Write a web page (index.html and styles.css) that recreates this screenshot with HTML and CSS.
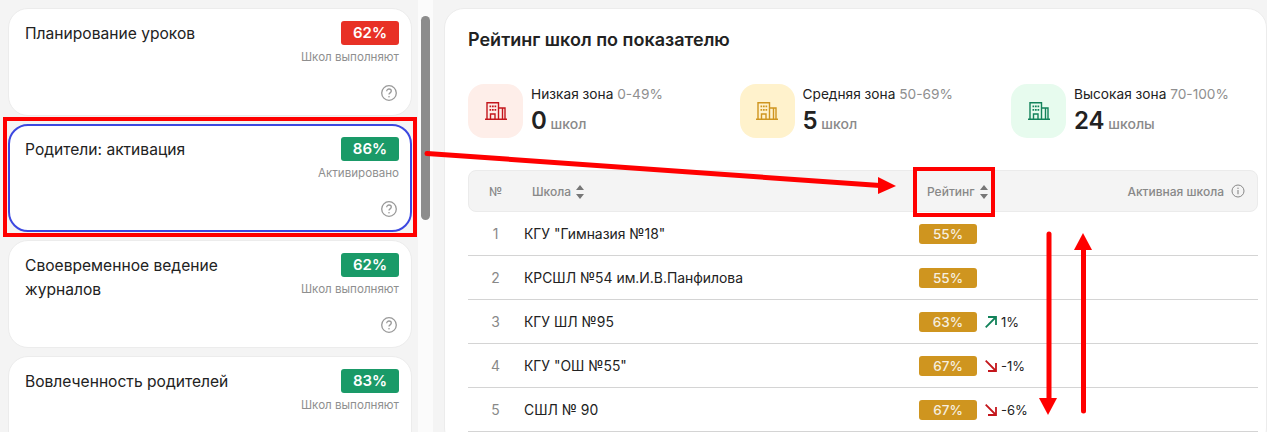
FILE: index.html
```html
<!DOCTYPE html>
<html lang="ru">
<head>
    <meta charset="UTF-8" />
    <title>Рейтинг школ</title>
    <link rel="stylesheet" href="styles.css">
</head>
<body>
    <svg width="0" height="0" class="defs">
        <symbol id="help" viewBox="0 0 16 16">
            <circle cx="8" cy="8" r="7.300" fill="none" stroke="currentColor" stroke-width="1.300" />
            <path d="M5.700 6.200c0-1.300 1.100-2.200 2.300-2.200s2.300.9 2.300 2.100c0 1.800-2.300 1.700-2.300 3.400" fill="none" stroke="currentColor" stroke-width="1.300" />
            <circle cx="8" cy="11.800" r=".8" fill="currentColor" />
        </symbol>
        <symbol id="building" viewBox="0 0 22 18">
            <path d="M0 17.300h22M2 17V.8h11.500V17M13.500 6H20v11M17.500 6v11M5.500 17v-5h4.500v5" fill="none" stroke="currentColor" stroke-width="1.400" />
            <path d="M4.500 3.500h1.700v1.700H4.500zM7 3.500h1.700v1.700H7zM9.500 3.500h1.700v1.700H9.500zM4.500 7h1.700v1.700H4.500zM7 7h1.700v1.700H7zM9.500 7h1.700v1.700H9.500z" fill="currentColor" />
        </symbol>
        <symbol id="sort" viewBox="0 0 8 14">
            <path d="M4 0l4 5H0zM4 14L0 9h8z" fill="currentColor" />
        </symbol>
        <symbol id="up" viewBox="0 0 12 12">
            <path d="M.7 11.300L11 1M3 1h8v8" fill="none" stroke="currentColor" stroke-width="1.800" />
        </symbol>
        <symbol id="down" viewBox="0 0 12 12">
            <path d="M.7.700L11 11M3 11h8V3" fill="none" stroke="currentColor" stroke-width="1.800" />
        </symbol>
    </svg>

    <div class="sidebar">
        <div class="cards">
            <div class="card">
                <div class="card-top">
                    <div class="card-title">Планирование уроков</div>
                    <div class="card-score">
                        <span class="badge red">62%</span>
                        <span class="card-note">Школ выполняют</span>
                    </div>
                </div>
                <svg class="help"><use href="#help" /></svg>
            </div>
            <div class="card active">
                <div class="card-top">
                    <div class="card-title">Родители: активация</div>
                    <div class="card-score">
                        <span class="badge green">86%</span>
                        <span class="card-note">Активировано</span>
                    </div>
                </div>
                <svg class="help"><use href="#help" /></svg>
            </div>
            <div class="card">
                <div class="card-top">
                    <div class="card-title">Своевременное ведение журналов</div>
                    <div class="card-score">
                        <span class="badge green">62%</span>
                        <span class="card-note">Школ выполняют</span>
                    </div>
                </div>
                <svg class="help"><use href="#help" /></svg>
            </div>
            <div class="card">
                <div class="card-top">
                    <div class="card-title">Вовлеченность родителей</div>
                    <div class="card-score">
                        <span class="badge green">83%</span>
                        <span class="card-note">Школ выполняют</span>
                    </div>
                </div>
                <svg class="help"><use href="#help" /></svg>
            </div>
        </div>
        <div class="scroll"><div class="scroll-thumb"></div></div>
    </div>

    <div class="panel">
        <h2>Рейтинг школ по показателю</h2>

        <div class="zones">
            <div class="zone">
                <div class="zone-icon low"><svg><use href="#building" /></svg></div>
                <div>
                    <div class="zone-name">Низкая зона <span>0-49%</span></div>
                    <div class="zone-count"><b>0</b> школ</div>
                </div>
            </div>
            <div class="zone">
                <div class="zone-icon mid"><svg><use href="#building" /></svg></div>
                <div>
                    <div class="zone-name">Средняя зона <span>50-69%</span></div>
                    <div class="zone-count"><b>5</b> школ</div>
                </div>
            </div>
            <div class="zone">
                <div class="zone-icon high"><svg><use href="#building" /></svg></div>
                <div>
                    <div class="zone-name">Высокая зона <span>70-100%</span></div>
                    <div class="zone-count"><b>24</b> школы</div>
                </div>
            </div>
        </div>

        <div class="thead">
            <div class="col-num">№</div>
            <div class="col-school th-school">Школа <svg class="sort"><use href="#sort" /></svg></div>
            <div class="col-rate th-rate">Рейтинг <svg class="sort"><use href="#sort" /></svg></div>
            <div class="col-active">Активная школа
                <svg class="info" viewBox="0 0 14 14">
                    <circle cx="7" cy="7" r="6" fill="none" stroke="currentColor" stroke-width="1" />
                    <path d="M7 6v4.200" stroke="currentColor" stroke-width="1.100" />
                    <circle cx="7" cy="4.200" r=".7" fill="currentColor" />
                </svg>
            </div>
        </div>

        <div class="row">
            <div class="col-num">1</div>
            <div class="col-school">КГУ "Гимназия №18"</div>
            <div class="col-rate"><span class="badge amber slim">55%</span></div>
        </div>
        <div class="row">
            <div class="col-num">2</div>
            <div class="col-school">КРСШЛ №54 им.И.В.Панфилова</div>
            <div class="col-rate"><span class="badge amber slim">55%</span></div>
        </div>
        <div class="row">
            <div class="col-num">3</div>
            <div class="col-school">КГУ ШЛ №95</div>
            <div class="col-rate"><span class="badge amber slim">63%</span><svg class="trend rise"><use href="#up" /></svg>1%</div>
        </div>
        <div class="row">
            <div class="col-num">4</div>
            <div class="col-school">КГУ "ОШ №55"</div>
            <div class="col-rate"><span class="badge amber slim">67%</span><svg class="trend fall"><use href="#down" /></svg>-1%</div>
        </div>
        <div class="row">
            <div class="col-num">5</div>
            <div class="col-school">СШЛ № 90</div>
            <div class="col-rate"><span class="badge amber slim">67%</span><svg class="trend fall"><use href="#down" /></svg>-6%</div>
        </div>
    </div>

    <!-- Пометки поверх скриншота -->
    <div class="mark mark-card"></div>
    <div class="mark mark-head"></div>
    <svg class="arrows" width="1267" height="432" viewBox="0 0 1267 432">
        <path d="M427 153.500L880 185.500" stroke="#f00" stroke-width="5" stroke-linecap="round" />
        <path d="M878 177L896 186L878 194z" fill="#f00" />
        <path d="M1049 234V400" stroke="#f00" stroke-width="5" stroke-linecap="round" />
        <path d="M1039 398H1057L1048 415z" fill="#f00" />
        <path d="M1083.500 411V248" stroke="#f00" stroke-width="5" stroke-linecap="round" />
        <path d="M1074 250H1092L1083 233z" fill="#f00" />
    </svg>
</body>
</html>
```

FILE: styles.css
```css
* {
    box-sizing: border-box;
}

body {
    font-family: Inter, "Noto Sans", sans-serif;
    background-color: #f4f4f4;
    color: #222222;
    margin: 0;
    height: 432px;
    overflow: hidden;
    display: flex;
    position: relative;
}

.defs {
    position: absolute;
}

.sidebar {
    width: 433px;
    height: 432px;
    flex-shrink: 0;
    display: flex;
    overflow: hidden;
}

.cards {
    width: 418px;
    padding: 8px 6px 0 8px;
    display: flex;
    flex-direction: column;
    gap: 8px;
}

.card {
    height: 108px;
    flex-shrink: 0;
    background: #ffffff;
    border: 1px solid #ececec;
    border-radius: 20px;
    padding: 12px 12px 0 16px;
    position: relative;
}

.card.active {
    border: 2px solid #3c48e0;
    padding: 11px 11px 0 15px;
}

.card-top {
    display: flex;
    justify-content: space-between;
}

.card-title {
    font-size: 15.600px;
    line-height: 24px;
    width: 240px;
    padding-top: 1px;
}

.card-score {
    display: flex;
    flex-direction: column;
    align-items: flex-end;
    gap: 5px;
}

.card-note {
    font-size: 11.600px;
    line-height: 15px;
    color: #8f8f8f;
}

.badge {
    display: block;
    width: 58px;
    height: 24px;
    line-height: 24px;
    border-radius: 3px;
    text-align: center;
    color: #ffffff;
    font-size: 15px;
    font-weight: 600;
}

.badge.red {
    background: #e83126;
}

.badge.green {
    background: #1a9a68;
}

.badge.amber {
    background: #cf951f;
}

.badge.slim {
    height: 20px;
    line-height: 20px;
    font-size: 13.500px;
    font-weight: 500;
    color: #f6efe0;
}

.card .help {
    display: block;
    width: 16px;
    height: 16px;
    color: #999999;
    position: absolute;
    right: 14px;
    top: 76px;
}

.card.active .help {
    right: 13px;
    top: 75px;
}

.scroll {
    width: 15px;
    background: #fbfbfb;
    padding: 16px 3px 0;
}

.scroll-thumb {
    height: 204px;
    background: #8c8c8c;
    border-radius: 5px;
}

.panel {
    width: 823px;
    margin: 8px 0 0 11px;
    height: 440px;
    background: #ffffff;
    border: 1px solid #ececec;
    border-radius: 20px;
    padding: 20px 8px 0 23px;
}

h2 {
    margin: 0;
    font-size: 18px;
    line-height: 22px;
    font-weight: 600;
}

.zones {
    display: flex;
    margin-top: 33px;
}

.zone {
    width: 271.500px;
    height: 54px;
    flex-shrink: 0;
    display: flex;
    gap: 8px;
}

.zone-icon {
    width: 55px;
    height: 54px;
    border-radius: 16px;
    display: flex;
    align-items: center;
    justify-content: center;
}

.zone-icon svg {
    width: 22px;
    height: 18px;
}

.zone-icon.low {
    background: #feeee9;
    color: #c4161c;
}

.zone-icon.mid {
    background: #fff2cc;
    color: #cf951f;
}

.zone-icon.high {
    background: #e7fbee;
    color: #12825a;
}

.zone-name {
    font-size: 13.700px;
    line-height: 20px;
}

.zone-name span {
    color: #8f8f8f;
}

.zone-count {
    font-size: 14px;
    line-height: 30px;
    margin-top: 2px;
    color: #8a8a8a;
    font-weight: 500;
}

.zone-count b {
    font-size: 24px;
    font-weight: 600;
    color: #222222;
}

.thead {
    margin-top: 32px;
    height: 42px;
    background: #f4f4f4;
    border: 1px solid #ebebeb;
    border-radius: 8px;
    display: flex;
    align-items: center;
    font-size: 12px;
    font-weight: 500;
    color: #888888;
}

.thead .col-num {
    margin-left: -1px;
}

.th-school {
    padding-left: 8px;
}

.th-rate {
    padding-left: 8px;
}

.sort {
    width: 8px;
    height: 14px;
    margin-left: 2px;
    vertical-align: -3px;
    color: #777777;
}

.col-num {
    width: 56px;
    text-align: center;
    padding-right: 1px;
}

.col-school {
    width: 395px;
}

.col-rate {
    width: 200px;
    display: flex;
    align-items: center;
    font-size: 13px;
}

.th-rate,
.th-school {
    display: block;
    font-size: 12px;
}

.col-active {
    flex: 1;
    display: flex;
    justify-content: flex-end;
    align-items: center;
    gap: 7px;
    padding-right: 12px;
}

.info {
    width: 14px;
    height: 14px;
}

.row {
    height: 44px;
    border-bottom: 1px solid #d4d4d4;
    display: flex;
    align-items: center;
    font-size: 13.900px;
}

.row .col-num {
    color: #888888;
}

.trend {
    width: 12px;
    height: 12px;
    margin: 0 4px 0 8px;
}

.trend.rise {
    color: #12825a;
}

.trend.fall {
    color: #c4161c;
}

.mark {
    position: absolute;
    border: 4px solid #ff0000;
}

.mark-card {
    left: 3px;
    top: 117px;
    width: 414px;
    height: 120px;
}

.mark-head {
    left: 913px;
    top: 167px;
    width: 82px;
    height: 50px;
}

.arrows {
    position: absolute;
    left: 0;
    top: 0;
}
```
